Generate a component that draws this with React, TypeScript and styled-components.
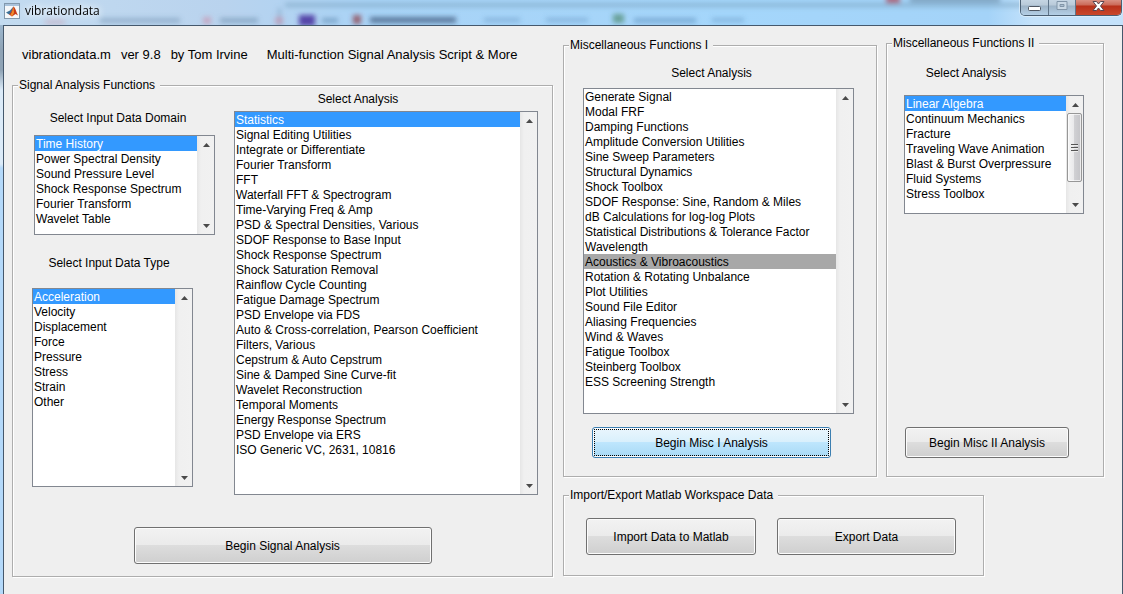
import React from "react";
import styled, { createGlobalStyle, css } from "styled-components";

const GlobalStyle = createGlobalStyle`
  * { box-sizing: border-box; }
  body {
    margin: 0;
    background: #efefef;
    color: #000;
    font: 12px/15px "Liberation Sans", Arial, sans-serif;
  }
`;

const Window = styled.div`
  min-height: 100vh;
  display: flex;
  flex-direction: column;
  background: linear-gradient(#a9cbe8 0, #8fa3b5 50px, #8fa3b5 70px, #dcebf8 90px, #dcebf8 164px, #b4d9fa 168px, #b4d9fa 100%);
`;

const TitleBar = styled.header`
  position: relative;
  height: 25px;
  display: flex;
  align-items: flex-start;
  gap: 5px;
  padding-left: 4px;
  overflow: hidden;
  background: linear-gradient(90deg, #c3dbf0 0, #b9d3ee 20%, #a9d3f6 33%, #a4d6fb 65%, #a4d3f8 88%, #c4e2fb 92%, #c4e2fb 100%);
`;

const Backdrop = styled.svg`
  position: absolute;
  inset: 0;
  width: 100%;
  height: 100%;
`;

const AppIcon = styled.svg`
  position: relative;
  width: 16px;
  height: 16px;
  margin-top: 3px;
`;

const Title = styled.h1`
  position: relative;
  flex: 1;
  margin: 3px 0 0;
  font: 12px/16px "Open Sans", "Segoe UI", sans-serif;
  text-shadow: 0 0 6px #fff, 0 0 10px #fff;
`;

const WindowControls = styled.div`
  position: relative;
  display: flex;
  height: 16px;
  margin-right: 1px;
  border: 1px solid #4b5f73;
  border-top: 0;
  border-radius: 0 0 5px 5px;
  overflow: hidden;
  box-shadow: 0 0 0 1px #e4f1fbaa;
`;

const ControlButton = styled.button<{ $close?: boolean }>`
  width: ${({ $close }) => ($close ? 46 : 27)}px;
  padding: 0;
  border: 0;
  border-left: 1px solid #5f7489;
  display: flex;
  justify-content: center;
  background: ${({ $close }) =>
    $close
      ? "linear-gradient(#d99083 0, #cb6a58 5px, #b8301a 6px, #c9482c 100%)"
      : "linear-gradient(#c5d5e3 0, #b9cad9 5px, #9db3c7 6px, #b4cfe6 100%)"};
  &:first-child { border-left: 0; }
`;

const Client = styled.main`
  flex: 1;
  margin: 0 0 0 3px;
  padding: 0 18px 17px 8px;
  border: solid #45586c;
  border-width: 1px 1px 0 1px;
  background: #efefef;
  display: grid;
  grid-template-columns: 541fr 541fr;
  gap: 10px;
  align-items: start;
`;

const Column = styled.div`
  display: flex;
  flex-direction: column;
  min-width: 0;
`;

const Intro = styled.div`
  display: flex;
  margin: 21px 0 14px 10px;
  font-size: 13px;
  line-height: 16px;
  white-space: nowrap;
`;

const IntroText = styled.span<{ $after: number }>`
  margin-right: ${({ $after }) => $after}px;
`;

const Group = styled.fieldset<{ $height: number }>`
  min-width: 0;
  min-height: ${({ $height }) => $height}px;
  margin: 0;
  padding: 0;
  border: 1px solid #adadad;
  box-shadow: inset 1px 1px #fff, 1px 1px #fff;
  display: flow-root;
`;

const Legend = styled.legend`
  margin-left: 5px;
  padding: 0 5px 0 1px;
  background: #efefef;
  line-height: 16px;
  white-space: nowrap;
`;

const MiscRow = styled.div`
  display: grid;
  grid-template-columns: 314fr 218fr;
  gap: 9px;
  align-items: end;
  margin-top: 9px;
`;

const TransferRow = styled.div`
  display: grid;
  grid-template-columns: 421fr 120fr;
  margin-top: 10px;
`;

const SignalLists = styled.div`
  display: flex;
  gap: 20px;
  padding: 0 14px 0 19px;
`;

const DomainColumn = styled.div`
  width: 182px;
  display: flex;
  flex-direction: column;
  gap: 21px;
  padding-top: 18px;
`;

const MainColumn = styled.div`
  flex: 1;
  min-width: 0;
  margin-top: -1px;
`;

const MiscBody = styled.div<{ $top: number; $left: number; $right: number }>`
  padding: ${({ $top, $left, $right }) => `${$top}px ${$right}px 0 ${$left}px`};
`;

const ListLabel = styled.label<{ $gap: number; $shift?: number }>`
  display: block;
  margin-bottom: ${({ $gap }) => $gap}px;
  padding-right: ${({ $shift = 0 }) => $shift}px;
  text-align: center;
`;

const ListFrame = styled.div<{ $height: number; $width?: number; $indent?: number }>`
  display: flex;
  width: ${({ $width }) => ($width ? `${$width}px` : "auto")};
  height: ${({ $height }) => $height}px;
  margin-left: ${({ $indent = 0 }) => $indent}px;
  border: 1px solid #828790;
  background: #fff;
`;

const List = styled.select<{ $muted?: boolean }>`
  flex: 1;
  min-width: 0;
  height: 100%;
  margin: 0;
  padding: 0;
  border: 0;
  border-radius: 0;
  outline: 0;
  background: #fff;
  color: #000;
  font: inherit;
  overflow: hidden;
  scrollbar-width: none;

  option {
    height: 15px;
    min-height: 15px;
    padding: 1px 0 0 1px;
    line-height: 14px;
    -webkit-text-fill-color: #000;
  }
  option:checked {
    background: ${({ $muted }) =>
      $muted ? "linear-gradient(#a8a8a8, #a8a8a8)" : "linear-gradient(#3399ff, #3399ff)"};
    ${({ $muted }) => !$muted && css`-webkit-text-fill-color: #fff;`}
  }
`;

const Rail = styled.div`
  width: 17px;
  display: flex;
  flex-direction: column;
  align-items: center;
  background: linear-gradient(90deg, #e6e6e6, #f0f0f0 4px, #f1f1f1);
`;

const ArrowIcon = styled.svg`
  width: 17px;
  height: 17px;
  flex: none;
`;

const Thumb = styled.div`
  width: 15px;
  height: 69px;
  display: flex;
  align-items: center;
  justify-content: center;
  border: 1px solid #979797;
  border-radius: 2px;
  background: linear-gradient(90deg, #f5f5f5, #e9e9eb 45%, #d0d0d3 50%, #c4c4c8);
  box-shadow: inset 0 0 0 1px #ffffffaa;
`;

const Spacer = styled.div`
  flex: 1;
`;

const PushButton = styled.button<{ $width?: string; $height?: number; $focus?: boolean }>`
  display: block;
  width: ${({ $width = "100%" }) => $width};
  height: ${({ $height = 31 }) => $height}px;
  padding: 1px 0 0;
  border: 1px solid #707070;
  border-radius: 3px;
  background: linear-gradient(#f2f2f2, #ebebeb 48%, #dddddd 50%, #cfcfcf);
  box-shadow: inset 0 0 0 1px #fcfcfc;
  color: #000;
  font: inherit;
  white-space: nowrap;
  ${({ $focus }) =>
    $focus &&
    css`
      border-color: #3c7fb1;
      background: linear-gradient(#eaf6fd, #d9f0fc 48%, #bee6fd 50%, #a7d9f5);
      outline: 1px dotted #000;
      outline-offset: -3px;
    `}
`;

const SignalAction = styled.div`
  display: flex;
  justify-content: center;
  margin-top: 32px;
`;

const TransferActions = styled.div`
  display: flex;
  gap: 21px;
  padding: 15px 20px 0 22px;
`;

const domains = ["Time History", "Power Spectral Density", "Sound Pressure Level", "Shock Response Spectrum", "Fourier Transform", "Wavelet Table"];
const types = ["Acceleration", "Velocity", "Displacement", "Force", "Pressure", "Stress", "Strain", "Other"];
const analyses = [
  "Statistics", "Signal Editing Utilities", "Integrate or Differentiate", "Fourier Transform", "FFT",
  "Waterfall FFT & Spectrogram", "Time-Varying Freq & Amp", "PSD & Spectral Densities, Various",
  "SDOF Response to Base Input", "Shock Response Spectrum", "Shock Saturation Removal",
  "Rainflow Cycle Counting", "Fatigue Damage Spectrum", "PSD Envelope via FDS",
  "Auto & Cross-correlation, Pearson Coefficient", "Filters, Various", "Cepstrum & Auto Cepstrum",
  "Sine & Damped Sine Curve-fit", "Wavelet Reconstruction", "Temporal Moments",
  "Energy Response Spectrum", "PSD Envelope via ERS", "ISO Generic VC, 2631, 10816",
];
const miscOne = [
  "Generate Signal", "Modal FRF", "Damping Functions", "Amplitude Conversion Utilities",
  "Sine Sweep Parameters", "Structural Dynamics", "Shock Toolbox", "SDOF Response: Sine, Random & Miles",
  "dB Calculations for log-log Plots", "Statistical Distributions & Tolerance Factor", "Wavelength",
  "Acoustics & Vibroacoustics", "Rotation & Rotating Unbalance", "Plot Utilities", "Sound File Editor",
  "Aliasing Frequencies", "Wind & Waves", "Fatigue Toolbox", "Steinberg Toolbox", "ESS Screening Strength",
];
const miscTwo = [
  "Linear Algebra", "Continuum Mechanics", "Fracture", "Traveling Wave Animation",
  "Blast & Burst Overpressure", "Fluid Systems", "Stress Toolbox",
];

function Arrow({ down }: { down?: boolean }) {
  return (
    <ArrowIcon viewBox="0 0 17 17" aria-hidden="true">
      <path d={down ? "M6 7h7l-3.500 4z" : "M6 11h7l-3.500-4z"} fill="#4a4a4a" />
    </ArrowIcon>
  );
}

interface ListBoxProps {
  id: string;
  items: string[];
  height: number;
  width?: number;
  indent?: number;
  selected?: string;
  muted?: boolean;
  thumb?: boolean;
}

function ListBox({ id, items, height, width, indent, selected = items[0], muted, thumb }: ListBoxProps) {
  return (
    <ListFrame $height={height} $width={width} $indent={indent}>
      <List id={id} size={items.length} defaultValue={selected} $muted={muted}>
        {items.map((item) => (
          <option key={item}>{item}</option>
        ))}
      </List>
      <Rail aria-hidden="true">
        <Arrow />
        {thumb && (
          <Thumb>
            <svg width="7" height="8" viewBox="0 0 7 8">
              <path d="M0 .5h7M0 3.500h7M0 6.500h7" stroke="#555" />
              <path d="M0 1.500h7M0 4.500h7M0 7.500h7" stroke="#eee" />
            </svg>
          </Thumb>
        )}
        <Spacer />
        <Arrow down />
      </Rail>
    </ListFrame>
  );
}

function GlassBackdrop() {
  return (
    <Backdrop aria-hidden="true">
      <defs>
        <filter id="soft" x="-20%" y="-80%" width="140%" height="260%">
          <feGaussianBlur stdDeviation="2.500" />
        </filter>
      </defs>
      <g filter="url(#soft)">
        <rect x="285" y="3" width="850" height="4" fill="#7fa6c4" opacity=".7" />
        <rect x="278" y="8" width="3" height="20" fill="#7fa0be" opacity=".6" />
        <rect x="45" y="19" width="20" height="6" fill="#d28f9b" opacity=".3" />
        <rect x="100" y="18" width="80" height="5" fill="#6688a8" opacity=".45" />
        <rect x="203" y="17" width="8" height="7" fill="#d07f98" opacity=".5" />
        <rect x="220" y="18" width="38" height="5" fill="#6688a8" opacity=".55" />
        <rect x="275" y="17" width="8" height="7" fill="#d07f98" opacity=".5" />
        <rect x="299" y="15" width="16" height="11" fill="#4a35a0" opacity=".9" />
        <rect x="322" y="18" width="16" height="5" fill="#4f7aa4" opacity=".5" />
        <rect x="353" y="15" width="8" height="9" fill="#8e4350" opacity=".8" />
        <rect x="370" y="17" width="86" height="6" fill="#2f4a6c" opacity=".65" />
        <rect x="484" y="18" width="36" height="4" fill="#5485b3" opacity=".4" />
        <rect x="546" y="18" width="42" height="4" fill="#5485b3" opacity=".4" />
        <rect x="613" y="14" width="11" height="9" fill="#4e8a70" opacity=".7" />
        <rect x="634" y="18" width="62" height="5" fill="#5485b3" opacity=".5" />
        <rect x="712" y="18" width="32" height="4" fill="#5485b3" opacity=".4" />
        <rect x="886" y="-3" width="14" height="6" fill="#b03045" opacity=".8" />
        <rect x="910" y="-3" width="90" height="5" fill="#5d7890" opacity=".6" />
      </g>
    </Backdrop>
  );
}

export default function App() {
  return (
    <>
      <GlobalStyle />
      <Window>
        <TitleBar>
          <GlassBackdrop />
          <AppIcon viewBox="0 0 16 16" aria-hidden="true">
            <rect x=".5" y=".5" width="15" height="15" fill="#f6f8fa" stroke="#8298ad" />
            <path d="M1 1h14v2H1z" fill="#a9c3dc" />
            <path d="M2 9.500 6 7.500 9.500 3.500 7 11 5 11.500z" fill="#3b7098" />
            <path d="M9.500 3.500C11 4 12.500 9.500 14 12.500L11.500 11 8 13.500 5 11.500C7.500 10 8.500 5 9.500 3.500z" fill="#c83a18" />
            <path d="M9.500 3.500 10 10 8 13.500 6.500 11.500C8 10 8.800 6 9.500 3.500z" fill="#ef8b2c" />
          </AppIcon>
          <Title>vibrationdata</Title>
          <WindowControls>
            <ControlButton aria-label="Minimize">
              <svg width="13" height="14" viewBox="0 0 13 14"><rect x=".5" y="6.500" width="12" height="4" rx="1" fill="#fff" stroke="#4e5662" /></svg>
            </ControlButton>
            <ControlButton aria-label="Maximize">
              <svg width="12" height="14" viewBox="0 0 12 14"><path d="M1 1.500h10v8H1zM4 4.500v2h4v-2z" fill="#c9d8e5" fillRule="evenodd" stroke="#8195a8" /></svg>
            </ControlButton>
            <ControlButton aria-label="Close" $close>
              <svg width="13" height="14" viewBox="0 0 13 14"><path d="M1 1.500h3.500l2 2.500 2-2.500H12L8.500 6l3.500 4.500H8.500l-2-2.500-2 2.500H1L4.500 6z" fill="#fff" stroke="#5a4550" /></svg>
            </ControlButton>
          </WindowControls>
        </TitleBar>
        <Client>
          <Column>
            <Intro>
              <IntroText $after={10}>vibrationdata.m</IntroText>
              <IntroText $after={10}>ver 9.8</IntroText>
              <IntroText $after={19}>by Tom Irvine</IntroText>
              <IntroText $after={0}>Multi-function Signal Analysis Script &amp; More</IntroText>
            </Intro>
            <Group $height={500}>
              <Legend>Signal Analysis Functions</Legend>
              <SignalLists>
                <DomainColumn>
                  <div>
                    <ListLabel htmlFor="domain" $gap={9} $shift={10}>Select Input Data Domain</ListLabel>
                    <ListBox id="domain" items={domains} width={181} height={100} indent={2} />
                  </div>
                  <div>
                    <ListLabel htmlFor="type" $gap={17} $shift={28}>Select Input Data Type</ListLabel>
                    <ListBox id="type" items={types} width={161} height={199} />
                  </div>
                </DomainColumn>
                <MainColumn>
                  <ListLabel htmlFor="analysis" $gap={4} $shift={56}>Select Analysis</ListLabel>
                  <ListBox id="analysis" items={analyses} height={384} />
                </MainColumn>
              </SignalLists>
              <SignalAction>
                <PushButton $width="298px" $height={37}>Begin Signal Analysis</PushButton>
              </SignalAction>
            </Group>
          </Column>
          <Column>
            <MiscRow>
              <Group $height={440}>
                <Legend>Miscellaneous Functions I</Legend>
                <MiscBody $top={13} $left={19} $right={22}>
                  <ListLabel htmlFor="misc1" $gap={7} $shift={14}>Select Analysis</ListLabel>
                  <ListBox id="misc1" items={miscOne} height={326} selected="Acoustics & Vibroacoustics" muted />
                </MiscBody>
                <MiscBody $top={13} $left={28} $right={45}>
                  <PushButton $focus>Begin Misc I Analysis</PushButton>
                </MiscBody>
              </Group>
              <Group $height={442}>
                <Legend>Miscellaneous Functions II</Legend>
                <MiscBody $top={15} $left={17} $right={19}>
                  <ListLabel htmlFor="misc2" $gap={14} $shift={56}>Select Analysis</ListLabel>
                  <ListBox id="misc2" items={miscTwo} height={119} thumb />
                </MiscBody>
                <MiscBody $top={213} $left={18} $right={34}>
                  <PushButton>Begin Misc II Analysis</PushButton>
                </MiscBody>
              </Group>
            </MiscRow>
            <TransferRow>
              <Group $height={89}>
                <Legend>Import/Export Matlab Workspace Data</Legend>
                <TransferActions>
                  <PushButton $width="170px" $height={37}>Import Data to Matlab</PushButton>
                  <PushButton $width="179px" $height={37}>Export Data</PushButton>
                </TransferActions>
              </Group>
            </TransferRow>
          </Column>
        </Client>
      </Window>
    </>
  );
}
